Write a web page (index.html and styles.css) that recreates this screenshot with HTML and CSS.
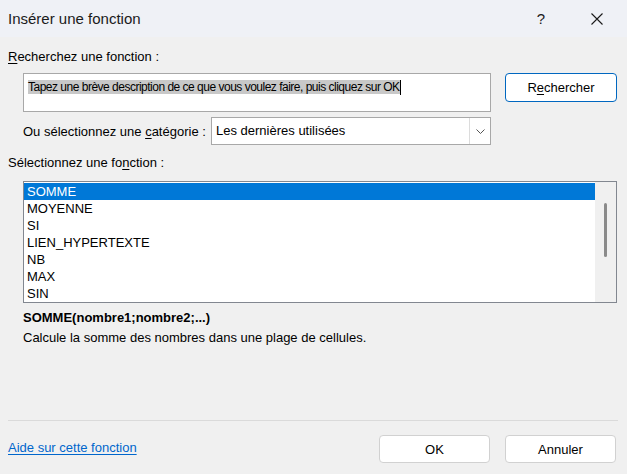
FILE: index.html
```html
<!DOCTYPE html>
<html lang="fr">
<head>
  <meta charset="UTF-8" />
  <meta name="viewport" content="width=device-width, initial-scale=1.0" />
  <title>Insérer une fonction</title>
  <link rel="stylesheet" href="styles.css">
</head>
<body>

  <div class="titlebar">
    <div class="title">Insérer une fonction</div>
    <div class="tb-btn help">?</div>
    <div class="tb-btn close">
      <svg width="12" height="12" viewBox="0 0 12 12">
        <path d="M0.5 0.5 L11.5 11.5 M11.5 0.5 L0.5 11.5" stroke="#1a1a1a" stroke-width="1.1" fill="none" />
      </svg>
    </div>
  </div>

  <div class="content">
    <div class="label"><u>R</u>echerchez une fonction :</div>

    <div class="search-row">
      <div class="search-input">
        <span class="selected-text">Tapez une brève description de ce que vous voulez faire, puis cliquez sur OK</span><span class="caret"></span>
      </div>
      <button class="btn default">R<u>e</u>chercher</button>
    </div>

    <div class="category-row">
      <div class="category-label">Ou sélectionnez une <u>c</u>atégorie :</div>
      <div class="select">
        <div class="select-value">Les dernières utilisées</div>
        <div class="select-arrow">
          <svg width="9" height="5" viewBox="0 0 9 5">
            <polyline points="0.5,0.5 4.5,4.5 8.5,0.5" stroke="#555" stroke-width="1" fill="none" />
          </svg>
        </div>
      </div>
    </div>

    <div class="label label-fn">Sélectionnez une fo<u>n</u>ction :</div>

    <div class="list">
      <ul class="list-items">
        <li class="selected">SOMME</li>
        <li>MOYENNE</li>
        <li>SI</li>
        <li>LIEN_HYPERTEXTE</li>
        <li>NB</li>
        <li>MAX</li>
        <li>SIN</li>
      </ul>
      <div class="scrollbar">
        <div class="thumb"></div>
      </div>
    </div>

    <div class="signature">SOMME(nombre1;nombre2;...)</div>
    <div class="description">Calcule la somme des nombres dans une plage de cellules.</div>
  </div>

  <footer>
    <a class="help-link" href="#">Aide sur cette fonction</a>
    <button class="btn small">OK</button>
    <button class="btn small">Annuler</button>
  </footer>

</body>
</html>
```

FILE: styles.css
```css
:root {
  --bg: #f0f0f0;
  --titlebar: #eff1f6;
  --border: #a8a8a8;
  --list-border: #828790;
  --blue: #0078d7;
  --link: #0066cc;
}

* {
  box-sizing: border-box;
}

body {
  margin: 0;
  width: 627px;
  height: 474px;
  background-color: var(--bg);
  color: #000;
  font-family: "Liberation Sans", sans-serif;
  font-size: 13px;
  display: flex;
  flex-direction: column;
  overflow: hidden;
}

u {
  text-decoration: underline;
  text-underline-offset: 2px;
}

.titlebar {
  height: 37px;
  background-color: var(--titlebar);
  display: flex;
  align-items: center;
  padding-left: 8px;
  padding-right: 7px;
  gap: 10px;
}

.title {
  flex: 1;
  font-size: 15px;
  color: #1b1b1b;
}

.tb-btn {
  width: 46px;
  height: 37px;
  display: flex;
  align-items: center;
  justify-content: center;
  color: #1b1b1b;
}

.help {
  font-size: 15px;
}

.content {
  padding: 0 10px 0 8px;
}

.label {
  margin-top: 12px;
  line-height: 16px;
}

.search-row {
  display: flex;
  align-items: flex-start;
  gap: 14px;
  margin-top: 8px;
  padding-left: 15px;
}

.search-input {
  width: 468px;
  height: 39px;
  border: 1px solid var(--border);
  background-color: #fff;
  padding: 6px 0 0 4px;
  line-height: 15px;
  font-size: 12px;
  letter-spacing: -0.5px;
  white-space: nowrap;
}

.selected-text {
  background-color: #c8c8c8;
}

.caret {
  display: inline-block;
  width: 1px;
  height: 15px;
  background-color: #000;
  vertical-align: top;
}

.btn {
  width: 112px;
  height: 29px;
  border: 1px solid #d1d1d1;
  border-radius: 4px;
  background-color: #fff;
  font: inherit;
  color: #000;
  padding: 0;
}

.btn.default {
  border-color: #0067c0;
}

.btn.small {
  width: 111px;
  height: 28px;
}

.category-row {
  display: flex;
  align-items: center;
  margin-top: 5px;
  padding-left: 15px;
}

.category-label {
  width: 188px;
}

.select {
  width: 280px;
  height: 28px;
  display: flex;
  border: 1px solid var(--border);
  background-color: #fff;
}

.select-value {
  flex: 1;
  padding-left: 4px;
  line-height: 26px;
}

.select-arrow {
  width: 21px;
  border-left: 1px solid #dcdcdc;
  display: flex;
  align-items: center;
  justify-content: center;
}

.label-fn {
  margin-top: 10px;
}

.list {
  margin: 10px 0 0 15px;
  height: 122px;
  border: 1px solid var(--list-border);
  background-color: #fff;
  display: flex;
}

.list-items {
  flex: 1;
  list-style: none;
  margin: 0;
  padding: 1px 0 0 0;
}

.list-items li {
  height: 17px;
  line-height: 17px;
  padding-left: 3px;
}

.list-items li.selected {
  background-color: var(--blue);
  color: #fff;
}

.scrollbar {
  width: 21px;
  background-color: var(--bg);
  padding: 21px 0 0 9px;
}

.thumb {
  width: 3px;
  height: 54px;
  border-radius: 2px;
  background-color: #8a8a8a;
}

.signature {
  margin: 7px 0 0 15px;
  font-weight: bold;
  line-height: 16px;
}

.description {
  margin: 4px 0 0 15px;
  line-height: 16px;
}

footer {
  margin: auto 9px 0 8px;
  border-top: 1px solid #dadada;
  padding: 14px 2px 11px 0;
  display: flex;
  align-items: center;
  gap: 15px;
}

.help-link {
  flex: 1;
  color: var(--link);
  text-decoration: underline;
  text-underline-offset: 2px;
  margin-bottom: 4px;
}
```
